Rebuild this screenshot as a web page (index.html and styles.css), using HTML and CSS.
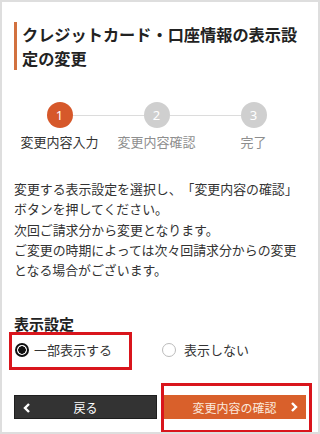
FILE: index.html
```html
<!DOCTYPE html>
<html lang="ja">
<head>
<meta charset="utf-8">
<link rel="stylesheet" href="styles.css">
</head>
<body>
<div class="frame">
  <h1 class="title">クレジットカード・口座情報の表示設<br>定の変更</h1>

  <div class="steps">
    <div class="step active">
      <div class="step-top"><span class="seg hidden"></span><span class="circle">1</span><span class="seg"></span></div>
      <div class="step-label">変更内容入力</div>
    </div>
    <div class="step">
      <div class="step-top"><span class="seg"></span><span class="circle">2</span><span class="seg"></span></div>
      <div class="step-label">変更内容確認</div>
    </div>
    <div class="step">
      <div class="step-top"><span class="seg"></span><span class="circle">3</span><span class="seg hidden"></span></div>
      <div class="step-label">完了</div>
    </div>
  </div>

  <p class="desc">変更する表示設定を選択し、「変更内容の確認」<br>ボタンを押してください。<br>次回ご請求分から変更となります。<br>ご変更の時期によっては次々回請求分からの変更<br>となる場合がございます。</p>

  <h2 class="sub">表示設定</h2>
  <div class="options">
    <label class="option highlight"><span class="radio on"></span><span>一部表示する</span></label>
    <label class="option"><span class="radio"></span><span>表示しない</span></label>
  </div>

  <div class="buttons">
    <button class="btn back"><svg class="chev" width="8" height="10" viewBox="0 0 8 10"><polyline points="6,1 2,5 6,9" fill="none" stroke="#fff" stroke-width="2.4"/></svg><span>戻る</span></button>
    <button class="btn next highlight-btn"><span>変更内容の確認</span><svg class="chev right" width="8" height="10" viewBox="0 0 8 10"><polyline points="2,1 6,5 2,9" fill="none" stroke="#fff" stroke-width="2.4"/></svg></button>
  </div>
</div>
</body>
</html>
```

FILE: styles.css
```css
* { box-sizing: border-box; }
html, body { margin: 0; padding: 0; }
body {
  font-family: "Noto Sans CJK JP", "Noto Sans", sans-serif;
  color: #333;
  background: #fff;
  text-spacing-trim: space-all;
}
.frame {
  width: 320px;
  height: 434px;
  border: 2px solid #dedede;
  padding: 0 12px;
  overflow: hidden;
}
.title {
  margin: 20px 0 0;
  border-left: 3px solid #d2713f;
  padding-left: 5px;
  font-size: 16.2px;
  line-height: 24px;
  font-weight: 700;
  color: #222;
  white-space: nowrap;
}
.steps {
  display: grid;
  grid-template-columns: repeat(3, 97px);
  margin: 32px 0 0 -3px;
}
.step-top {
  display: flex;
  align-items: center;
}
.seg {
  flex: 1;
  height: 1px;
  background: #dcdcdc;
}
.seg.hidden { background: transparent; }
.circle {
  width: 26px;
  height: 26px;
  border-radius: 50%;
  background: #cfcfcf;
  color: #fff;
  font-family: "Noto Sans", sans-serif;
  font-size: 13px;
  line-height: 26px;
  text-align: center;
}
.step.active .circle { background: #d6582a; }
.step-label {
  margin-top: 5px;
  text-align: center;
  font-size: 13px;
  line-height: 18px;
  color: #8e8e8e;
}
.step.active .step-label { color: #333; }
.desc {
  margin: 28px 0 0;
  font-size: 12.9px;
  line-height: 20.3px;
  color: #333;
  white-space: nowrap;
}
.sub {
  margin: 34px 0 0;
  font-size: 15px;
  line-height: 20px;
  font-weight: 700;
  color: #222;
}
.options {
  display: grid;
  grid-template-columns: 147px 1fr;
  margin-top: 6px;
}
.option {
  position: relative;
  display: flex;
  align-items: center;
  gap: 5px;
  padding-left: 1px;
  font-size: 13px;
  line-height: 20px;
  color: #333;
}
.radio {
  width: 14px;
  height: 14px;
  border-radius: 50%;
  border: 1px solid #bbb;
  background: #fff;
  flex: none;
  margin-right: 0;
}
.radio.on {
  border: 2px solid #111;
  background: radial-gradient(circle, #111 0 3.5px, #fff 4px);
}
.option + .option .radio { margin-right: 3px; }
.option.highlight::after {
  content: "";
  position: absolute;
  left: -5px;
  top: -8px;
  width: 117px;
  height: 32px;
  border: 3px solid #d9151c;
}
.buttons {
  display: grid;
  grid-template-columns: 1fr 1fr;
  gap: 6px;
  margin-top: 35px;
}
.btn {
  position: relative;
  height: 24px;
  border: none;
  padding: 0 8px;
  font-family: "Noto Sans CJK JP", sans-serif;
  font-size: 12px;
  color: #fff;
  display: flex;
  align-items: center;
  justify-content: center;
}
.btn.back {
  background: #333;
  border: 1px solid #1e1e1e;
}
.btn.next { background: #d9602b; color: #fbe9dd; }
.chev {
  position: absolute;
  top: 7px;
}
.back .chev { left: 8px; }
.next .chev { right: 8px; }
.highlight-btn::after {
  content: "";
  position: absolute;
  left: -2px;
  right: -6px;
  top: -12px;
  bottom: -14px;
  border: 3px solid #d9151c;
}
```
